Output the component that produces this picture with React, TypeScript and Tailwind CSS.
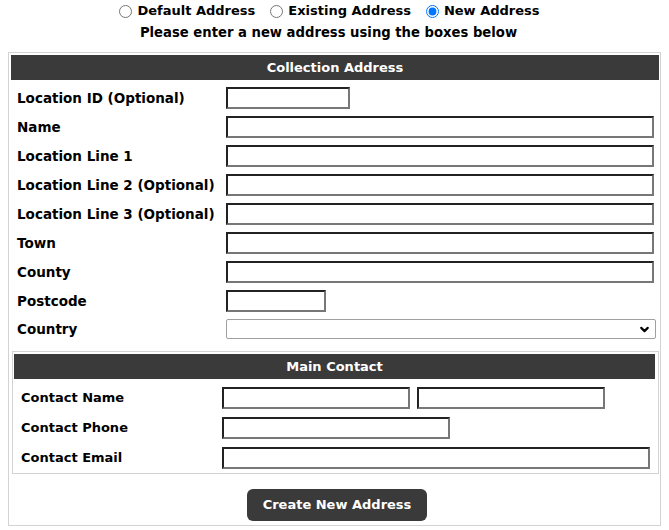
import { ChevronDown } from "lucide-react";

const ADDRESS_ROWS = [
  { label: "Location ID (Optional)", width: "w-[124px]" },
  { label: "Name", width: "w-[428px]" },
  { label: "Location Line 1", width: "w-[428px]" },
  { label: "Location Line 2 (Optional)", width: "w-[428px]" },
  { label: "Location Line 3 (Optional)", width: "w-[428px]" },
  { label: "Town", width: "w-[428px]" },
  { label: "County", width: "w-[428px]" },
  { label: "Postcode", width: "w-[100px]" },
];

const inputCls =
  "h-[22px] border-2 border-t-[#222] border-l-[#222] border-r-[#777] border-b-[#777] bg-white px-1 text-[13px] font-normal outline-none";

function Radio({ label, checked }: { label: string; checked?: boolean }) {
  return (
    <label className="flex items-center gap-[5px]">
      <input type="radio" name="addr" defaultChecked={checked} className="m-0 h-[13px] w-[13px]" />
      <span>{label}</span>
    </label>
  );
}

export default function App() {
  return (
    <div className="h-[530px] w-[669px] bg-white font-['DejaVu_Sans',Verdana,sans-serif] text-[13px] font-bold text-black">
      <div className="flex h-[22px] items-center justify-center gap-[15px] pr-[10px]">
        <Radio label="Default Address" />
        <Radio label="Existing Address" />
        <Radio label="New Address" checked />
      </div>
      <div className="flex h-[22px] items-center justify-center pr-[12px] text-[13.2px]">
        Please enter a new address using the boxes below
      </div>

      <div className="ml-[8px] mt-[8px] w-[653px] border border-[#d3d3d3] pb-[4px] pl-[2px] pr-[1px] pt-[2px]">
        <div className="flex h-[25px] items-center justify-center bg-[#3a3a3a] text-white">
          Collection Address
        </div>

        <div className="mt-[3px] text-[13.5px]">
          {ADDRESS_ROWS.map(({ label, width }) => (
            <div key={label} className="flex h-[29px] items-center pl-[6px]">
              <span className="w-[209px] shrink-0 pt-[1px]">{label}</span>
              <input type="text" className={`${inputCls} ${width}`} />
            </div>
          ))}
          <div className="flex h-[29px] items-center pl-[6px]">
            <span className="w-[209px] shrink-0">Country</span>
            <div className="relative mb-[1px] h-[20px] w-[430px] rounded-[2px] border border-[#a0a0a0] bg-white">
              <ChevronDown size={13} strokeWidth={4} className="absolute right-[4px] top-[3px] text-black" />
            </div>
          </div>
        </div>

        <div className="ml-[1px] mt-[7px] w-[647px] border border-[#d3d3d3] pl-[1px] pr-[2px] pt-[2px]">
          <div className="flex h-[25px] w-[641px] items-center justify-center bg-[#3a3a3a] text-white">
            Main Contact
          </div>
          <div className="mt-[4px]">
            <div className="flex h-[30px] items-center pl-[7px]">
              <span className="w-[201px] shrink-0">Contact Name</span>
              <input type="text" className={`${inputCls} w-[188px]`} />
              <input type="text" className={`${inputCls} ml-[7px] w-[188px]`} />
            </div>
            <div className="flex h-[30px] items-center pl-[7px]">
              <span className="w-[201px] shrink-0">Contact Phone</span>
              <input type="text" className={`${inputCls} w-[228px]`} />
            </div>
            <div className="flex h-[30px] items-center pl-[7px]">
              <span className="w-[201px] shrink-0">Contact Email</span>
              <input type="text" className={`${inputCls} w-[428px]`} />
            </div>
          </div>
        </div>

        <div className="mt-[15px] flex justify-center pl-[4px]">
          <button className="h-[32px] w-[180px] rounded-[6px] bg-[#3a3a3a] text-[13px] font-bold text-white">
            Create New Address
          </button>
        </div>
      </div>
    </div>
  );
}
